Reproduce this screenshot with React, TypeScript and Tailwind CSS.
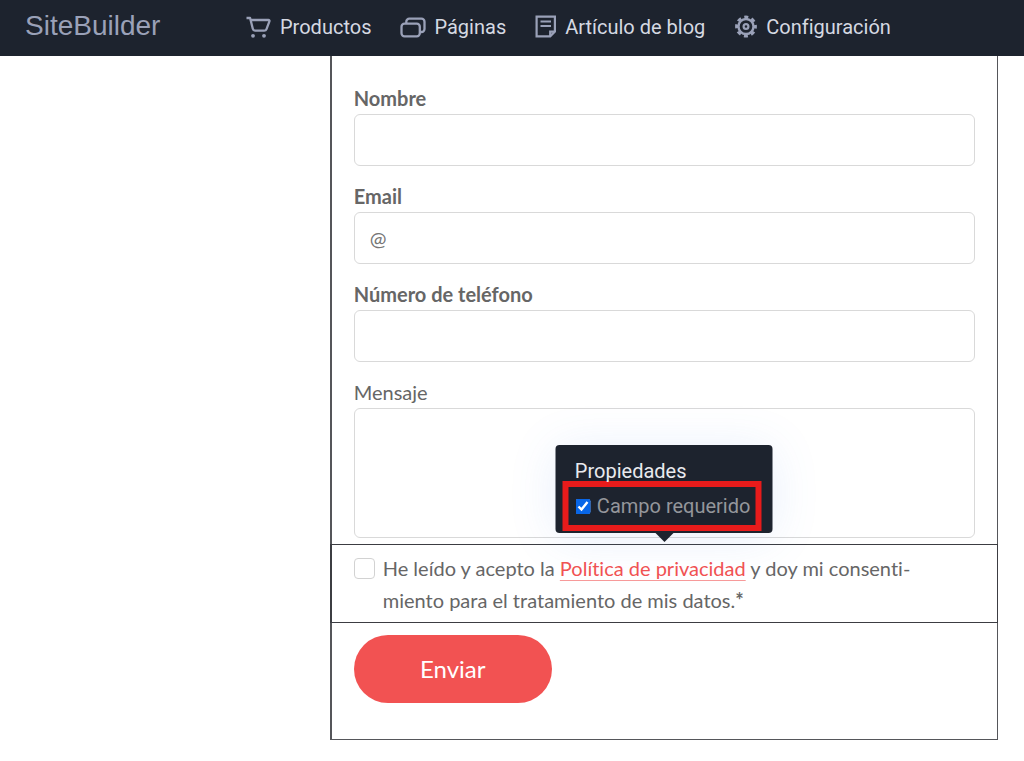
import { useState } from "react";

function CartIcon() {
  return (
    <svg viewBox="0 0 26 24" className="h-6 w-[26px] shrink-0" fill="none" stroke="currentColor" strokeWidth="2.3" strokeLinejoin="round">
      <path d="M0.500 3h3.600l2.700 10.800c.3 1.200 1 1.900 2.200 1.900h9.200c1.200 0 1.900-.5 2.300-1.600l2.900-7.700c.3-.9-.1-1.400-1-1.400H4.800" />
      <circle cx="7" cy="20.800" r="1.900" fill="currentColor" stroke="none" />
      <circle cx="18" cy="20.800" r="1.900" fill="currentColor" stroke="none" />
    </svg>
  );
}

function PagesIcon() {
  return (
    <svg viewBox="0 0 26 24" className="h-6 w-[26px] shrink-0" fill="none" stroke="currentColor" strokeWidth="2.3">
      <rect x="1.500" y="8.700" width="18.300" height="12.600" rx="3" />
      <path d="M6.300 8.200V6.700a3 3 0 0 1 3-3h12.200a3 3 0 0 1 3 3v7.300a3 3 0 0 1-3 3h-1.500" />
    </svg>
  );
}

function BlogIcon() {
  return (
    <svg viewBox="0 0 22 24" className="h-6 w-[22px] shrink-0" fill="none" stroke="currentColor" strokeWidth="2.200">
      <path d="M1.600 1.600h18.300v15l-4.700 4.700H1.600z" />
      <path d="M19.900 16.600h-4.700v4.700" />
      <path d="M5.500 6.500h10.500M5.500 11h10.500" />
    </svg>
  );
}

function GearIcon() {
  return (
    <svg viewBox="0 0 24 24" className="h-6 w-6 shrink-0" fill="none" stroke="currentColor">
      <circle cx="12" cy="11.500" r="7.500" strokeWidth="2.400" />
      <circle cx="12" cy="11.500" r="2.400" strokeWidth="2.200" />
      <circle cx="12" cy="11.500" r="9.400" strokeWidth="3" strokeDasharray="4 3.382" strokeDashoffset="2" />
    </svg>
  );
}

const navItems = [
  { label: "Productos", icon: <CartIcon /> },
  { label: "Páginas", icon: <PagesIcon /> },
  { label: "Artículo de blog", icon: <BlogIcon /> },
  { label: "Configuración", icon: <GearIcon /> },
];

const fields = [
  { id: "nombre", label: "Nombre", type: "text", placeholder: "" },
  { id: "email", label: "Email", type: "email", placeholder: "@" },
  { id: "telefono", label: "Número de teléfono", type: "tel", placeholder: "" },
];

function PropertiesPopover() {
  const [required, setRequired] = useState(true);

  return (
    <div className="absolute bottom-full left-1/2 mb-3 w-[217px] -translate-x-1/2 rounded bg-[#1d232e] px-[7px] pt-3 pb-0.5 font-['Roboto',sans-serif] text-xl leading-6 shadow-[0_4px_48px_rgba(80,130,230,0.13)]">
      <p className="px-3 pt-0.5 text-[#e9eaee]">Propiedades</p>
      <label className="-mt-0.5 flex h-[50px] w-[199px] items-center gap-1.5 border-6 border-[#e81b1b] pl-[7px] whitespace-nowrap text-[#94969b]">
        <input
          type="checkbox"
          checked={required}
          onChange={(e) => setRequired(e.target.checked)}
          className="h-[15px] w-[15px] shrink-0 accent-[#0866e8]"
        />
        Campo requerido
      </label>
      {/* Arrow */}
      <span className="absolute top-full left-1/2 -translate-x-1/2 border-x-9 border-t-9 border-x-transparent border-t-[#1d232e]" />
    </div>
  );
}

export default function App() {
  return (
    <div className="min-h-screen bg-white font-['Lato',sans-serif] text-[#666666] [font-variant-ligatures:none]">
      <header className="flex h-14 items-center bg-[#1d232e] pr-8 pb-0.5 pl-[25px] text-[#9aa1b8]">
        <a href="#" className="w-[221px] shrink-0 pb-0.5 font-['Liberation_Sans',sans-serif] text-[28px] leading-8">
          SiteBuilder
        </a>
        <nav className="flex items-center gap-[29px] font-['Roboto',sans-serif] text-xl whitespace-nowrap">
          {navItems.map((item) => (
            <a key={item.label} href="#" className="flex items-center gap-2">
              {item.icon}
              <span className="text-[#d5d9e2]">{item.label}</span>
            </a>
          ))}
        </nav>
      </header>

      <main className="pr-[26px] pl-[32.2%]">
        <form
          onSubmit={(e) => e.preventDefault()}
          className="border border-t-0 border-l-2 border-[#55565a] pt-[26px] pb-9 text-xl"
        >
          <div className="flex flex-col gap-3.5 px-[22px]">
            {fields.map((field) => (
              <div key={field.id} className="flex flex-col">
                <label htmlFor={field.id} className="leading-8 font-bold">
                  {field.label}
                </label>
                <input
                  id={field.id}
                  type={field.type}
                  placeholder={field.placeholder}
                  className="h-[52px] rounded-md border border-[#d9d9d9] px-[15px] placeholder:text-[#757575]"
                />
              </div>
            ))}
            <div className="flex flex-col">
              <label htmlFor="mensaje" className="leading-8">
                Mensaje
              </label>
              <textarea id="mensaje" className="h-[130px] resize-none rounded-md border border-[#d9d9d9] px-4 py-3" />
            </div>
          </div>

          {/* Selected field with its properties popover */}
          <div className="relative -mr-px -ml-0.5 mt-1.5 flex gap-2 border border-l-2 border-[#3c3d42] px-[22px] pt-[7px] pb-1.5 leading-8">
            <PropertiesPopover />
            <input
              id="privacidad"
              type="checkbox"
              className="mt-1.5 h-[21px] w-[21px] shrink-0 appearance-none rounded-sm border border-[#d2d2d2] checked:bg-[#f25252]"
            />
            <label htmlFor="privacidad" className="pr-9">
              He leído y acepto la{" "}
              <a href="#" className="text-[#f25252] underline decoration-[#f79a9a] decoration-1 underline-offset-4">
                Política de privacidad
              </a>{" "}
              y doy mi consenti&shy;miento para el tratamiento de mis datos.
              <span className="font-bold">*</span>
            </label>
          </div>

          <div className="px-[22px] pt-3">
            <button type="submit" className="h-[68px] w-[198px] rounded-full bg-[#f25252] text-2xl text-white">
              Enviar
            </button>
          </div>
        </form>
      </main>
    </div>
  );
}
